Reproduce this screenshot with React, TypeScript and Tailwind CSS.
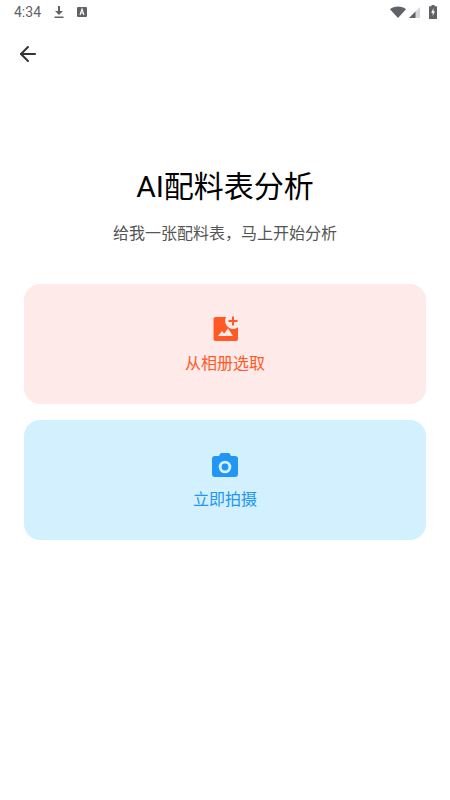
import { ArrowLeft } from 'lucide-react';

function StatusBar() {
  return (
    <div className="h-6 flex items-center justify-between pl-[14px] pr-[13px] text-[#5f6368]">
      <div className="flex items-center">
        <span className="text-[14px] leading-none font-['Roboto',sans-serif]">4:34</span>
        <svg className="w-[14px] h-[14px] ml-[11px]" viewBox="0 0 14 14" fill="currentColor">
          <path d="M6 1h2v5h3L7 10 3 6h3zM2.5 11.5h9v1.4h-9z" />
        </svg>
        <svg className="w-[12px] h-[12px] ml-[10px]" viewBox="0 0 12 12">
          <rect x="1" y="1" width="10" height="10" rx="1" fill="currentColor" />
          <path d="M4 9l2-6 2 6M4.800 7h2.400" stroke="#fff" strokeWidth="1.100" fill="none" />
        </svg>
      </div>
      <div className="flex items-center">
        <svg className="w-[16px] h-[14px]" viewBox="0 0 16 14" fill="currentColor">
          <path d="M0 4.200C2 2.400 4.800 1.400 8 1.400s6 1 8 2.800L8 13z" />
        </svg>
        <svg className="w-[13px] h-[13px] ml-[2px]" viewBox="0 0 13 13">
          <path d="M12 1v11H1z" fill="#d5d7d9" />
          <path d="M7.500 5.500V12H1z" fill="currentColor" />
        </svg>
        <svg className="w-[8px] h-[14px] ml-[8px]" viewBox="0 0 8 14">
          <path d="M2.500 0h3v1.200H8V14H0V1.200h2.500z" fill="currentColor" />
          <path d="M4.600 3 2.200 7.800h1.500V11l2.200-4.800H4.400z" fill="#fff" />
        </svg>
      </div>
    </div>
  );
}

function AddPhotoIcon() {
  return (
    <svg className="w-[28px] h-[28px]" viewBox="0 0 28 28">
      <path
        d="M4.500 2H15.100A8 8 0 0 0 27 12.200V24a2 2 0 0 1-2 2H4.500a2 2 0 0 1-2-2V4a2 2 0 0 1 2-2z"
        fill="#ff5a26"
      />
      <path d="M7 21l4-5 2.200 2.400 3.800-4.900 5 7.500z" fill="#ffeaea" />
      <path d="M21 1.500h2V5h3.500v2H23v3.500h-2V7h-3.500V5H21z" fill="#ff5a26" />
    </svg>
  );
}

function CameraIcon() {
  return (
    <svg className="w-[28px] h-[28px]" viewBox="0 0 28 28">
      <path
        d="M10.500 2h7a1.500 1.500 0 0 1 1.300.8L20 5h4a3 3 0 0 1 3 3v15a3 3 0 0 1-3 3H4a3 3 0 0 1-3-3V8a3 3 0 0 1 3-3h4l1.200-2.200a1.500 1.500 0 0 1 1.300-.8z"
        fill="#2196f3"
      />
      <circle cx="14" cy="16" r="6.300" fill="#d3f0ff" />
      <circle cx="14" cy="16" r="3.400" fill="#2196f3" />
    </svg>
  );
}

export default function App() {
  return (
    <div className="w-[450px] h-[800px] bg-white font-['Roboto','Noto_Sans_CJK_SC',sans-serif] overflow-hidden">
      <StatusBar />
      <div className="pl-[16px] pt-[18px] h-[24px]">
        <ArrowLeft className="w-6 h-6 text-[#333333]" strokeWidth={2} />
      </div>

      <div className="mt-[116px] flex flex-col items-center">
        <h1 className="text-[30px] leading-[46px] text-black font-normal">AI配料表分析</h1>
        <p className="mt-[12px] text-[16px] leading-[24px] text-[#555555]">给我一张配料表，马上开始分析</p>
      </div>

      <div className="mt-[38px] px-[24px] flex flex-col gap-[16px]">
        <button className="h-[120px] rounded-[16px] bg-[#ffeaea] flex flex-col items-center pt-[31px]">
          <AddPhotoIcon />
          <span className="mt-[9px] text-[16px] leading-[24px] text-[#ff5a26]">从相册选取</span>
        </button>
        <button className="h-[120px] rounded-[16px] bg-[#d3f0ff] flex flex-col items-center pt-[31px]">
          <CameraIcon />
          <span className="mt-[9px] text-[16px] leading-[24px] text-[#2196f3]">立即拍摄</span>
        </button>
      </div>
    </div>
  );
}
